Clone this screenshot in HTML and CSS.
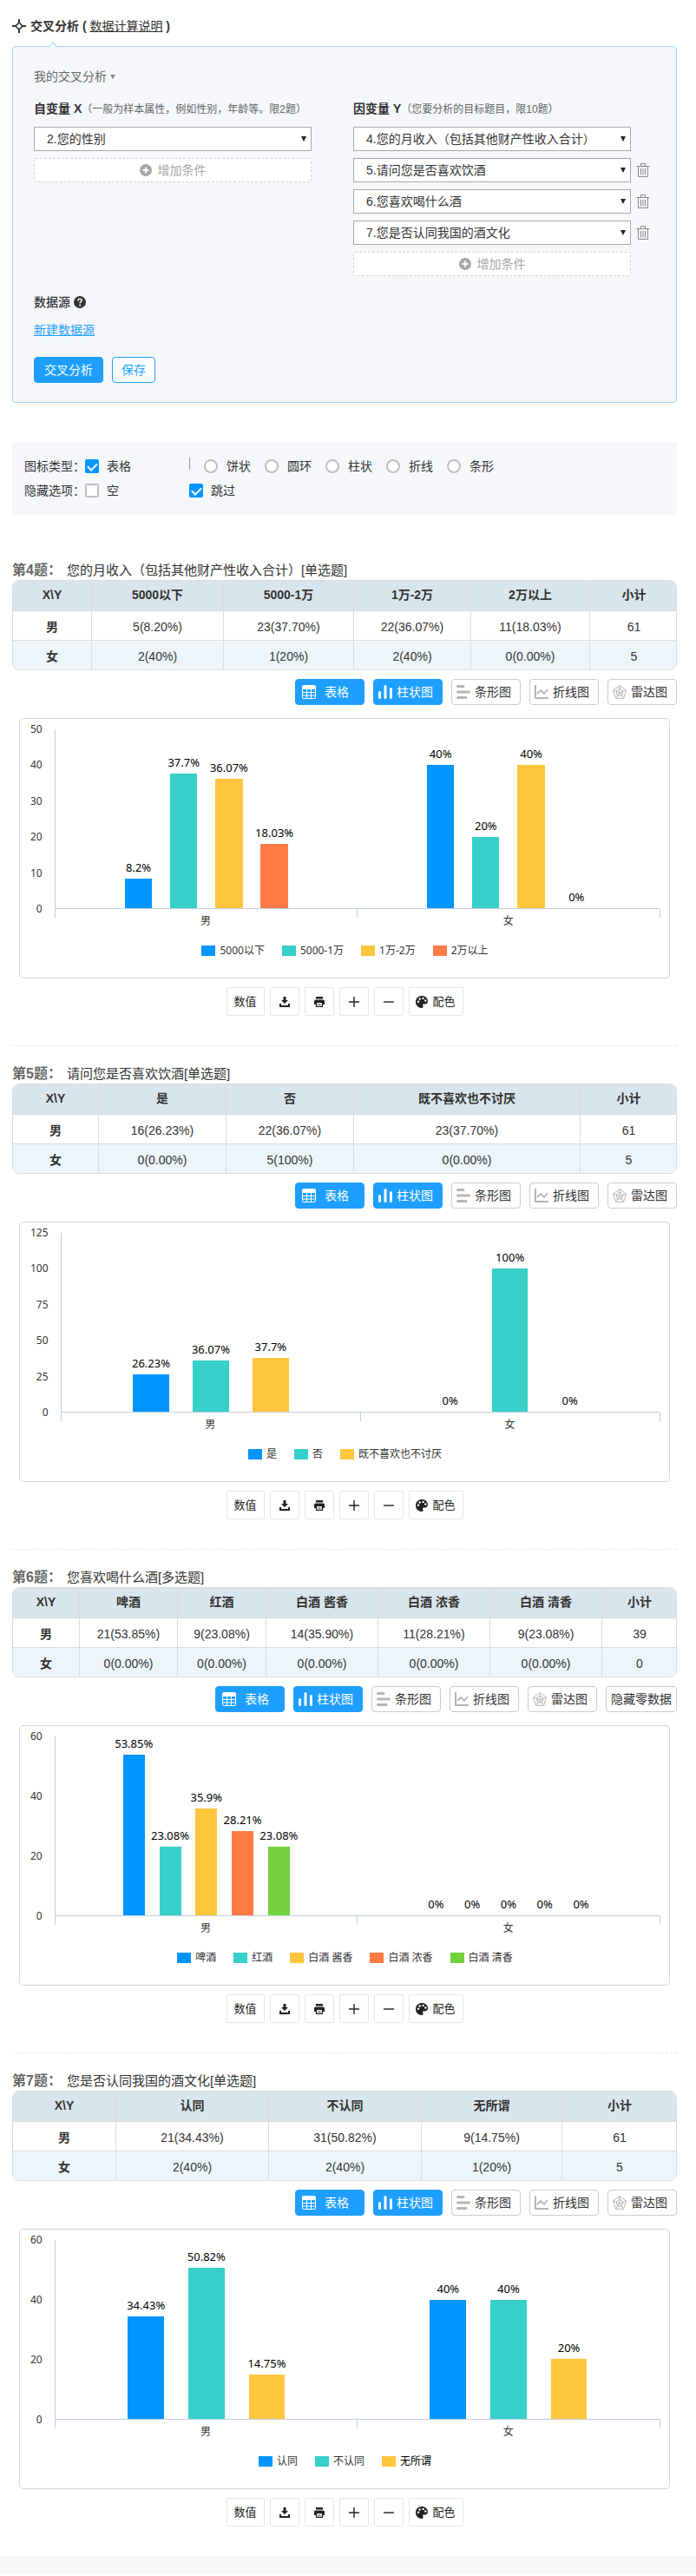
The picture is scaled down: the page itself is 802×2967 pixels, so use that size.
FILE: index.html
```html
<!DOCTYPE html>
<html lang="zh-CN">
<head>
  <meta charset="UTF-8">
  <meta name="viewport" content="width=device-width, initial-scale=1.0">
  <title>交叉分析</title>
  <link rel="stylesheet" href="styles.css">
</head>
<body>
  <!-- Icon sprite -->
  <svg class="sprite" aria-hidden="true">
    <symbol id="i-cross" viewBox="0 0 16 16"><path d="M8 0v5M8 11v5M0 8h5M11 8h5" stroke="currentColor" stroke-width="2"/><path d="M8 4l4 4-4 4-4-4z" fill="none" stroke="currentColor" stroke-width="1.6"/></symbol>
    <symbol id="i-add" viewBox="0 0 14 14"><circle cx="7" cy="7" r="7" fill="currentColor"/><path d="M7 3.5v7M3.5 7h7" stroke="#fff" stroke-width="2"/></symbol>
    <symbol id="i-help" viewBox="0 0 14 14"><circle cx="7" cy="7" r="7" fill="currentColor"/><path d="M4.9 5.4c0-2.9 4.300-2.700 4.300-.3 0 1.500-2 1.600-2 3.100" fill="none" stroke="#fff" stroke-width="1.6"/><circle cx="7.200" cy="10.500" r="1" fill="#fff"/></symbol>
    <symbol id="i-trash" viewBox="0 0 16 16"><path d="M.5 3.500h15M5.500 3V.5h5V3M2.500 4v11.500h11V4M5.500 6v7.500M8 6v7.500M10.500 6v7.500" fill="none" stroke="currentColor"/></symbol>
    <symbol id="i-table" viewBox="0 0 16 16"><path d="M0 2q0-2 2-2h12q2 0 2 2v3H0z" fill="currentColor"/><path d="M.5 4v10q0 1.500 1.500 1.500h12q1.500 0 1.500-1.500V4M.5 8.500h15M.5 12h15M5.500 4v12M10.500 4v12" fill="none" stroke="currentColor"/></symbol>
    <symbol id="i-bars" viewBox="0 0 16 16"><path d="M1.500 8.500v6M8 1.500v13M14.500 4.500v10" stroke="currentColor" stroke-width="3" stroke-linecap="round"/></symbol>
    <symbol id="i-rows" viewBox="0 0 16 16"><path d="M1.500 1.500h6.500M1.500 8h13M1.500 14.500h9.500" stroke="currentColor" stroke-width="3" stroke-linecap="round"/></symbol>
    <symbol id="i-line" viewBox="0 0 16 16"><path d="M1 0v15h15" fill="none" stroke="currentColor" stroke-width="2"/><path d="M3 10l4-4 4 4 4-5" fill="none" stroke="currentColor" stroke-width="1.800"/></symbol>
    <symbol id="i-radar" viewBox="0 0 16 16"><path d="M8 .6l7.400 5.400-2.800 9.300H3.400L.6 6zM8 4l4 3-1.500 5h-5L4 7zM8 .6V9M8 9l7.400-3M8 9l4.600 6M8 9l-4.600 6M8 9L.6 6" fill="none" stroke="currentColor"/></symbol>
    <symbol id="i-down" viewBox="0 0 12 12"><path d="M4.500 0h3v4H10L6 8 2 4h2.500z" fill="currentColor"/><path d="M1 8v3h10V8" fill="none" stroke="currentColor" stroke-width="2"/></symbol>
    <symbol id="i-print" viewBox="0 0 12 12"><path d="M2 0h8v2.500H2zM1.500 3.500h9Q12 3.500 12 5v4h-2V7H2v2H0V5q0-1.500 1.500-1.500z" fill="currentColor"/><path d="M2.600 7v4.400h6.800V7M4.500 9h3" fill="none" stroke="currentColor" stroke-width="1.200"/></symbol>
    <symbol id="i-plus" viewBox="0 0 12 12"><path d="M6 0v12M0 6h12" stroke="currentColor" stroke-width="1.400"/></symbol>
    <symbol id="i-minus" viewBox="0 0 12 12"><path d="M0 6h12" stroke="currentColor" stroke-width="1.400"/></symbol>
    <symbol id="i-palette" viewBox="0 0 14 14"><path d="M7 0c4 0 7 2.700 7 6 0 2.200-1.500 3.400-3.500 3.400H9.200c-1.200 0-1.400.9-.9 1.800.7 1.300.2 2.800-1.300 2.800-4 0-7-3-7-7s3-7 7-7z" fill="currentColor"/><g fill="#fff"><circle cx="3" cy="6.800" r="1.200"/><circle cx="4.700" cy="3.500" r="1.200"/><circle cx="8.600" cy="2.900" r="1.200"/><circle cx="11.300" cy="5.500" r="1.200"/></g></symbol>
  </svg>

  <div class="page">
    <h1 class="title"><svg class="icon"><use href="#i-cross"/></svg>交叉分析 ( <a href="#">数据计算说明</a> )</h1>

    <form class="panel">
      <div class="my-analysis">我的交叉分析 <i class="caret"></i></div>
      <div class="vars">
        <div class="var-col">
          <div class="var-title">自变量 X<span>（一般为样本属性，例如性别，年龄等。限2题）</span></div>
          <div class="var-row"><div class="select"><select aria-label="自变量"><option>2.您的性别</option></select></div></div>
          <button type="button" class="add"><svg class="icon"><use href="#i-add"/></svg>增加条件</button>
        </div>
        <div class="var-col">
          <div class="var-title">因变量 Y<span>（您要分析的目标题目，限10题）</span></div>
          <div class="var-row"><div class="select"><select aria-label="因变量"><option>4.您的月收入（包括其他财产性收入合计）</option></select></div></div>
          <div class="var-row">
            <div class="select"><select aria-label="因变量"><option>5.请问您是否喜欢饮酒</option></select></div>
            <button type="button" class="trash" aria-label="删除"><svg class="icon"><use href="#i-trash"/></svg></button>
          </div>
          <div class="var-row">
            <div class="select"><select aria-label="因变量"><option>6.您喜欢喝什么酒</option></select></div>
            <button type="button" class="trash" aria-label="删除"><svg class="icon"><use href="#i-trash"/></svg></button>
          </div>
          <div class="var-row">
            <div class="select"><select aria-label="因变量"><option>7.您是否认同我国的酒文化</option></select></div>
            <button type="button" class="trash" aria-label="删除"><svg class="icon"><use href="#i-trash"/></svg></button>
          </div>
          <button type="button" class="add"><svg class="icon"><use href="#i-add"/></svg>增加条件</button>
        </div>
      </div>
      <div class="source">数据源 <svg class="icon"><use href="#i-help"/></svg></div>
      <a class="new-source" href="#">新建数据源</a>
      <div class="actions">
        <button type="button" class="btn primary">交叉分析</button>
        <button type="button" class="btn">保存</button>
      </div>
    </form>

    <div class="options">
      <div class="option-row">
        <span>图标类型：</span>
        <label class="check"><input type="checkbox" checked>表格</label>
        <span class="divider"></span>
        <label class="radio"><input type="radio" name="chart">饼状</label>
        <label class="radio"><input type="radio" name="chart">圆环</label>
        <label class="radio"><input type="radio" name="chart">柱状</label>
        <label class="radio"><input type="radio" name="chart">折线</label>
        <label class="radio"><input type="radio" name="chart">条形</label>
      </div>
      <div class="option-row">
        <span>隐藏选项：</span>
        <label class="check"><input type="checkbox">空</label>
        <label class="check"><input type="checkbox" checked>跳过</label>
      </div>
    </div>

    <!-- Question 4 -->
    <section class="question">
      <h2><b>第4题：</b>您的月收入（包括其他财产性收入合计）[单选题]</h2>
      <div class="table-wrap">
        <table class="q4">
          <colgroup><col class="c1"><col class="c2"><col class="c3"><col class="c4"><col class="c5"><col class="c6"></colgroup>
          <thead><tr><th>X\Y</th><th>5000以下</th><th>5000-1万</th><th>1万-2万</th><th>2万以上</th><th>小计</th></tr></thead>
          <tbody>
            <tr><th>男</th><td>5(8.20%)</td><td>23(37.70%)</td><td>22(36.07%)</td><td>11(18.03%)</td><td>61</td></tr>
            <tr><th>女</th><td>2(40%)</td><td>1(20%)</td><td>2(40%)</td><td>0(0.00%)</td><td>5</td></tr>
          </tbody>
        </table>
      </div>
      <div class="tabs">
        <button class="tab on wide"><svg class="icon"><use href="#i-table"/></svg>表格</button>
        <button class="tab on"><svg class="icon"><use href="#i-bars"/></svg>柱状图</button>
        <button class="tab"><svg class="icon"><use href="#i-rows"/></svg>条形图</button>
        <button class="tab"><svg class="icon"><use href="#i-line"/></svg>折线图</button>
        <button class="tab"><svg class="icon"><use href="#i-radar"/></svg>雷达图</button>
      </div>
      <div class="chart">
        <div class="chart-body">
          <div class="y-axis"><span>50</span><span>40</span><span>30</span><span>20</span><span>10</span><span>0</span></div>
          <div class="plot">
            <div class="group">
              <div class="series"><span>8.2%</span><i class="bar blue" style="height:16.4%"></i></div>
              <div class="series"><span>37.7%</span><i class="bar teal" style="height:75.4%"></i></div>
              <div class="series"><span>36.07%</span><i class="bar yellow" style="height:72.14%"></i></div>
              <div class="series"><span>18.03%</span><i class="bar orange" style="height:36.06%"></i></div>
            </div>
            <div class="group">
              <div class="series"><span>40%</span><i class="bar blue" style="height:80%"></i></div>
              <div class="series"><span>20%</span><i class="bar teal" style="height:40%"></i></div>
              <div class="series"><span>40%</span><i class="bar yellow" style="height:80%"></i></div>
              <div class="series"><span>0%</span><i class="bar orange" style="height:0%"></i></div>
            </div>
          </div>
          <div class="x-axis"><span>男</span><span>女</span></div>
        </div>
        <div class="legend">
          <span><i class="blue"></i>5000以下</span><span><i class="teal"></i>5000-1万</span><span><i class="yellow"></i>1万-2万</span><span><i class="orange"></i>2万以上</span>
        </div>
      </div>
      <div class="tools">
        <button class="tool text">数值</button>
        <button class="tool" aria-label="下载"><svg class="icon"><use href="#i-down"/></svg></button>
        <button class="tool" aria-label="打印"><svg class="icon"><use href="#i-print"/></svg></button>
        <button class="tool" aria-label="放大"><svg class="icon"><use href="#i-plus"/></svg></button>
        <button class="tool" aria-label="缩小"><svg class="icon"><use href="#i-minus"/></svg></button>
        <button class="tool color"><svg class="icon"><use href="#i-palette"/></svg>配色</button>
      </div>
    </section>

    <!-- Question 5 -->
    <section class="question">
      <h2><b>第5题：</b>请问您是否喜欢饮酒[单选题]</h2>
      <div class="table-wrap">
        <table class="q5">
          <colgroup><col class="c1"><col class="c2"><col class="c3"><col class="c4"><col class="c5"></colgroup>
          <thead><tr><th>X\Y</th><th>是</th><th>否</th><th>既不喜欢也不讨厌</th><th>小计</th></tr></thead>
          <tbody>
            <tr><th>男</th><td>16(26.23%)</td><td>22(36.07%)</td><td>23(37.70%)</td><td>61</td></tr>
            <tr><th>女</th><td>0(0.00%)</td><td>5(100%)</td><td>0(0.00%)</td><td>5</td></tr>
          </tbody>
        </table>
      </div>
      <div class="tabs">
        <button class="tab on wide"><svg class="icon"><use href="#i-table"/></svg>表格</button>
        <button class="tab on"><svg class="icon"><use href="#i-bars"/></svg>柱状图</button>
        <button class="tab"><svg class="icon"><use href="#i-rows"/></svg>条形图</button>
        <button class="tab"><svg class="icon"><use href="#i-line"/></svg>折线图</button>
        <button class="tab"><svg class="icon"><use href="#i-radar"/></svg>雷达图</button>
      </div>
      <div class="chart">
        <div class="chart-body">
          <div class="y-axis"><span>125</span><span>100</span><span>75</span><span>50</span><span>25</span><span>0</span></div>
          <div class="plot">
            <div class="group">
              <div class="series"><span>26.23%</span><i class="bar blue" style="height:20.98%"></i></div>
              <div class="series"><span>36.07%</span><i class="bar teal" style="height:28.86%"></i></div>
              <div class="series"><span>37.7%</span><i class="bar yellow" style="height:30.16%"></i></div>
            </div>
            <div class="group">
              <div class="series"><span>0%</span><i class="bar blue" style="height:0%"></i></div>
              <div class="series"><span>100%</span><i class="bar teal" style="height:80%"></i></div>
              <div class="series"><span>0%</span><i class="bar yellow" style="height:0%"></i></div>
            </div>
          </div>
          <div class="x-axis"><span>男</span><span>女</span></div>
        </div>
        <div class="legend">
          <span><i class="blue"></i>是</span><span><i class="teal"></i>否</span><span><i class="yellow"></i>既不喜欢也不讨厌</span>
        </div>
      </div>
      <div class="tools">
        <button class="tool text">数值</button>
        <button class="tool" aria-label="下载"><svg class="icon"><use href="#i-down"/></svg></button>
        <button class="tool" aria-label="打印"><svg class="icon"><use href="#i-print"/></svg></button>
        <button class="tool" aria-label="放大"><svg class="icon"><use href="#i-plus"/></svg></button>
        <button class="tool" aria-label="缩小"><svg class="icon"><use href="#i-minus"/></svg></button>
        <button class="tool color"><svg class="icon"><use href="#i-palette"/></svg>配色</button>
      </div>
    </section>

    <!-- Question 6 -->
    <section class="question">
      <h2><b>第6题：</b>您喜欢喝什么酒[多选题]</h2>
      <div class="table-wrap">
        <table class="q6">
          <colgroup><col class="c1"><col class="c2"><col class="c3"><col class="c4"><col class="c5"><col class="c6"><col class="c7"></colgroup>
          <thead><tr><th>X\Y</th><th>啤酒</th><th>红酒</th><th>白酒 酱香</th><th>白酒 浓香</th><th>白酒 清香</th><th>小计</th></tr></thead>
          <tbody>
            <tr><th>男</th><td>21(53.85%)</td><td>9(23.08%)</td><td>14(35.90%)</td><td>11(28.21%)</td><td>9(23.08%)</td><td>39</td></tr>
            <tr><th>女</th><td>0(0.00%)</td><td>0(0.00%)</td><td>0(0.00%)</td><td>0(0.00%)</td><td>0(0.00%)</td><td>0</td></tr>
          </tbody>
        </table>
      </div>
      <div class="tabs">
        <button class="tab on wide"><svg class="icon"><use href="#i-table"/></svg>表格</button>
        <button class="tab on"><svg class="icon"><use href="#i-bars"/></svg>柱状图</button>
        <button class="tab"><svg class="icon"><use href="#i-rows"/></svg>条形图</button>
        <button class="tab"><svg class="icon"><use href="#i-line"/></svg>折线图</button>
        <button class="tab"><svg class="icon"><use href="#i-radar"/></svg>雷达图</button>
        <button class="tab plain">隐藏零数据</button>
      </div>
      <div class="chart">
        <div class="chart-body">
          <div class="y-axis"><span>60</span><span>40</span><span>20</span><span>0</span></div>
          <div class="plot">
            <div class="group">
              <div class="series"><span>53.85%</span><i class="bar blue" style="height:89.75%"></i></div>
              <div class="series"><span>23.08%</span><i class="bar teal" style="height:38.47%"></i></div>
              <div class="series"><span>35.9%</span><i class="bar yellow" style="height:59.83%"></i></div>
              <div class="series"><span>28.21%</span><i class="bar orange" style="height:47.02%"></i></div>
              <div class="series"><span>23.08%</span><i class="bar green" style="height:38.47%"></i></div>
            </div>
            <div class="group">
              <div class="series"><span>0%</span><i class="bar blue" style="height:0%"></i></div>
              <div class="series"><span>0%</span><i class="bar teal" style="height:0%"></i></div>
              <div class="series"><span>0%</span><i class="bar yellow" style="height:0%"></i></div>
              <div class="series"><span>0%</span><i class="bar orange" style="height:0%"></i></div>
              <div class="series"><span>0%</span><i class="bar green" style="height:0%"></i></div>
            </div>
          </div>
          <div class="x-axis"><span>男</span><span>女</span></div>
        </div>
        <div class="legend">
          <span><i class="blue"></i>啤酒</span><span><i class="teal"></i>红酒</span><span><i class="yellow"></i>白酒 酱香</span><span><i class="orange"></i>白酒 浓香</span><span><i class="green"></i>白酒 清香</span>
        </div>
      </div>
      <div class="tools">
        <button class="tool text">数值</button>
        <button class="tool" aria-label="下载"><svg class="icon"><use href="#i-down"/></svg></button>
        <button class="tool" aria-label="打印"><svg class="icon"><use href="#i-print"/></svg></button>
        <button class="tool" aria-label="放大"><svg class="icon"><use href="#i-plus"/></svg></button>
        <button class="tool" aria-label="缩小"><svg class="icon"><use href="#i-minus"/></svg></button>
        <button class="tool color"><svg class="icon"><use href="#i-palette"/></svg>配色</button>
      </div>
    </section>

    <!-- Question 7 -->
    <section class="question">
      <h2><b>第7题：</b>您是否认同我国的酒文化[单选题]</h2>
      <div class="table-wrap">
        <table class="q7">
          <colgroup><col class="c1"><col class="c2"><col class="c3"><col class="c4"><col class="c5"></colgroup>
          <thead><tr><th>X\Y</th><th>认同</th><th>不认同</th><th>无所谓</th><th>小计</th></tr></thead>
          <tbody>
            <tr><th>男</th><td>21(34.43%)</td><td>31(50.82%)</td><td>9(14.75%)</td><td>61</td></tr>
            <tr><th>女</th><td>2(40%)</td><td>2(40%)</td><td>1(20%)</td><td>5</td></tr>
          </tbody>
        </table>
      </div>
      <div class="tabs">
        <button class="tab on wide"><svg class="icon"><use href="#i-table"/></svg>表格</button>
        <button class="tab on"><svg class="icon"><use href="#i-bars"/></svg>柱状图</button>
        <button class="tab"><svg class="icon"><use href="#i-rows"/></svg>条形图</button>
        <button class="tab"><svg class="icon"><use href="#i-line"/></svg>折线图</button>
        <button class="tab"><svg class="icon"><use href="#i-radar"/></svg>雷达图</button>
      </div>
      <div class="chart">
        <div class="chart-body">
          <div class="y-axis"><span>60</span><span>40</span><span>20</span><span>0</span></div>
          <div class="plot">
            <div class="group">
              <div class="series"><span>34.43%</span><i class="bar blue" style="height:57.38%"></i></div>
              <div class="series"><span>50.82%</span><i class="bar teal" style="height:84.7%"></i></div>
              <div class="series"><span>14.75%</span><i class="bar yellow" style="height:24.58%"></i></div>
            </div>
            <div class="group">
              <div class="series"><span>40%</span><i class="bar blue" style="height:66.67%"></i></div>
              <div class="series"><span>40%</span><i class="bar teal" style="height:66.67%"></i></div>
              <div class="series"><span>20%</span><i class="bar yellow" style="height:33.33%"></i></div>
            </div>
          </div>
          <div class="x-axis"><span>男</span><span>女</span></div>
        </div>
        <div class="legend">
          <span><i class="blue"></i>认同</span><span><i class="teal"></i>不认同</span><span class="active"><i class="yellow"></i>无所谓</span>
        </div>
      </div>
      <div class="tools">
        <button class="tool text">数值</button>
        <button class="tool" aria-label="下载"><svg class="icon"><use href="#i-down"/></svg></button>
        <button class="tool" aria-label="打印"><svg class="icon"><use href="#i-print"/></svg></button>
        <button class="tool" aria-label="放大"><svg class="icon"><use href="#i-plus"/></svg></button>
        <button class="tool" aria-label="缩小"><svg class="icon"><use href="#i-minus"/></svg></button>
        <button class="tool color"><svg class="icon"><use href="#i-palette"/></svg>配色</button>
      </div>
    </section>
  </div>
  <footer class="footer"></footer>
</body>
</html>
```

FILE: styles.css
```css
* { margin: 0; padding: 0; box-sizing: border-box; }
body { background: #fff; color: #333; font: 14px/20px "Liberation Sans", Arial, "Noto Sans CJK SC", sans-serif; }
button, select, input { font: inherit; color: inherit; }
button { cursor: pointer; }
i { font-style: normal; }
.sprite { display: none; }
.icon { width: 16px; height: 16px; flex: none; }
.page { padding: 19px 22px 0 14px; }

.title { display: flex; align-items: center; height: 22px; font-size: 14px; line-height: 22px; margin-bottom: 12px; white-space: pre; }
.title .icon { margin-right: 5px; }
.title a { color: inherit; font-weight: normal; }

/* Analysis form */
.panel { position: relative; background: #f5f7fb; border: 1px solid #a5d5fb; border-radius: 4px; padding: 23px 24px 22px; }
.panel::before { content: ""; position: absolute; left: 42px; top: -4px; width: 7px; height: 7px; background: #f5f7fb; border: solid #a5d5fb; border-width: 1px 0 0 1px; transform: rotate(45deg); }
.my-analysis { color: #666; line-height: 22px; }
.caret { display: inline-block; border: 3px solid transparent; border-top: 5px solid #888; border-bottom: 0; vertical-align: 2px; }
.vars { display: flex; gap: 48px; margin-top: 16px; }
.var-col { flex: 0 1 320px; display: flex; flex-direction: column; gap: 8px; }
.var-title { font-weight: bold; margin-bottom: 3px; white-space: nowrap; }
.var-title span { font-weight: normal; font-size: 12px; line-height: 12px; color: #666; }
.var-row { display: flex; align-items: center; position: relative; }
.select { position: relative; width: 100%; }
.select select { display: block; width: 100%; height: 28px; padding: 0 14px; background: #fff; border: 1px solid #a9a9a9; border-radius: 0; appearance: none; }
.select::after { content: ""; position: absolute; right: 6px; top: 11px; border: 3px solid transparent; border-top: 6px solid #222; border-bottom: 0; pointer-events: none; }
.trash { position: absolute; left: 100%; margin-left: 6px; width: 16px; height: 16px; background: none; border: 0; color: #888; }
.trash .icon { display: block; }
.add { display: flex; align-items: center; justify-content: center; gap: 7px; height: 28px; background: #fff; border: 1px dashed #d0d0d0; color: #a6a6a6; border-radius: 2px; }
.add .icon { width: 14px; height: 14px; }
.source { display: flex; align-items: center; gap: 4px; margin-top: 20px; font-weight: 500; }
.source .icon { width: 14px; height: 14px; }
.new-source { display: table; margin-top: 12px; color: #1ea0fa; }
.actions { display: flex; gap: 10px; margin-top: 21px; }
.btn { height: 30px; padding: 0 10px; background: #fff; border: 1px solid #1e9fff; border-radius: 4px; color: #1e9fff; }
.btn.primary { background: #1e9fff; color: #fff; width: 80px; }

/* Display options */
.options { margin-top: 45px; padding: 14px; background: #f5f7fb; }
.option-row { display: flex; align-items: center; height: 28px; }
.check, .radio { display: flex; align-items: center; }
.check { width: 120px; gap: 9px; }
.radio { width: 70px; gap: 10px; }
.check input, .radio input { appearance: none; width: 16px; height: 16px; background: #fff; border: 2px solid #bfbfbf; border-radius: 2px; }
.radio input { border-radius: 50%; }
.check input:checked { background: #0095ff; border-color: #0095ff; display: grid; place-items: center; }
.check input:checked::after { content: ""; width: 5px; height: 9px; border: solid #fff; border-width: 0 2px 2px 0; transform: rotate(45deg); margin-bottom: 2px; }
.divider { width: 1px; height: 14px; margin: 0 16px 6px 0; background: #999; }

/* Question block */
.question { padding: 20px 0 34px; border-bottom: 1px dashed #e6e6e6; }
.options + .question { padding-top: 52px; }
.question:last-child { border-bottom: 0; }
.question h2 { font-size: 15px; line-height: 23px; font-weight: normal; }
.question h2 b { margin-right: 6px; font-size: 16px; line-height: 16px; color: #666; }
.table-wrap { border: 1px solid #d9dcde; border-radius: 8px; overflow: hidden; }
table { width: 100%; table-layout: fixed; border-collapse: separate; border-spacing: 0; text-align: center; }
th, td { height: 34px; padding: 3px 0 0; border-right: 1px solid #d9dcde; border-bottom: 1px solid #d9dcde; }
thead th { height: 35px; padding: 0 0 2px; background: #d9e5ec; }
th:last-child, td:last-child { border-right: 0; }
tbody tr:last-child > * { height: 33px; border-bottom: 0; background: #edf5fb; }
.q4 .c1 { width: 91px; } .q4 .c2 { width: 152px; } .q4 .c3 { width: 150px; } .q4 .c4 { width: 135px; } .q4 .c5 { width: 137px; } .q4 .c6 { width: 101px; }
.q5 .c1 { width: 99px; } .q5 .c2, .q5 .c3 { width: 147px; } .q5 .c4 { width: 261px; } .q5 .c5 { width: 111px; }
.q6 .c1 { width: 77px; } .q6 .c2 { width: 113px; } .q6 .c3 { width: 102px; } .q6 .c4, .q6 .c5, .q6 .c6 { width: 129px; } .q6 .c7 { width: 86px; }
.q7 .c1 { width: 119px; } .q7 .c2, .q7 .c3 { width: 176px; } .q7 .c4 { width: 162px; } .q7 .c5 { width: 132px; }

.tabs { display: flex; justify-content: flex-end; gap: 10px; margin: 10px 0 15px; }
.tab { display: flex; align-items: center; gap: 5px; width: 80px; height: 30px; padding: 0 5px; background: #fff; border: 1px solid #ccc; border-radius: 4px; white-space: nowrap; }
.tab .icon { color: #b5b5b5; }
.tab.on { background: #1e9fff; border-color: #1e9fff; color: #fff; }
.tab.on .icon { color: #fff; }
.tab.wide { padding-left: 7px; gap: 10px; }
.tab.plain { width: auto; justify-content: center; padding: 0 5px; }

/* Bar chart */
.chart { margin: 0 8px; padding: 12px 11px 22px 12px; border: 1px solid #d5d5d5; border-radius: 5px; font: 12px/18px "Noto Sans", "Noto Sans CJK SC", sans-serif; }
.chart-body { display: grid; grid-template-columns: auto 1fr; }
.y-axis { display: flex; flex-direction: column; justify-content: space-between; margin: -9px 14px -9px 0; text-align: right; }
.plot { display: flex; height: 207px; border-left: 1px solid #c0d0e0; border-bottom: 1px solid #c0d0e0; }
.group { flex: 1; display: flex; padding: 0 10%; }
.series { flex: 1; width: 0; display: flex; flex-direction: column; justify-content: flex-end; align-items: center; color: #000; font-size: 13px; }
.series span { margin-bottom: 4px; }
.bar { flex: none; width: 60%; }
.x-axis { grid-column: 2; display: flex; height: 30px; padding-right: 1px; margin-right: -1px; background: linear-gradient(#c0d0e0, #c0d0e0) right top / 1px 10px no-repeat; }
.x-axis span { flex: 1; padding-top: 5px; text-align: center; background: linear-gradient(#c0d0e0, #c0d0e0) left top / 1px 10px no-repeat; }
.legend { display: flex; justify-content: center; gap: 20px; margin-top: 9px; }
.legend span { display: flex; align-items: center; gap: 5px; }
.legend i { width: 16px; height: 12px; }
.legend .active { color: #000; }
.blue { background: #0095ff; }
.teal { background: #36cfc9; }
.yellow { background: #ffc53d; }
.orange { background: #ff7a45; }
.green { background: #73d13d; }

.tools { display: flex; justify-content: center; gap: 6px; margin-top: 10px; }
.tool { display: flex; align-items: center; justify-content: center; gap: 5px; width: 34px; height: 33px; background: #fff; border: 1px solid #e6e6e6; border-radius: 2px; font-size: 13px; color: #222; }
.tool .icon { width: 12px; height: 12px; }
.tool.text { width: 44px; }
.tool.color { width: 63px; }
.tool.color .icon { width: 14px; height: 14px; }
.footer { height: 22px; background: #f7f7f7; }
```
